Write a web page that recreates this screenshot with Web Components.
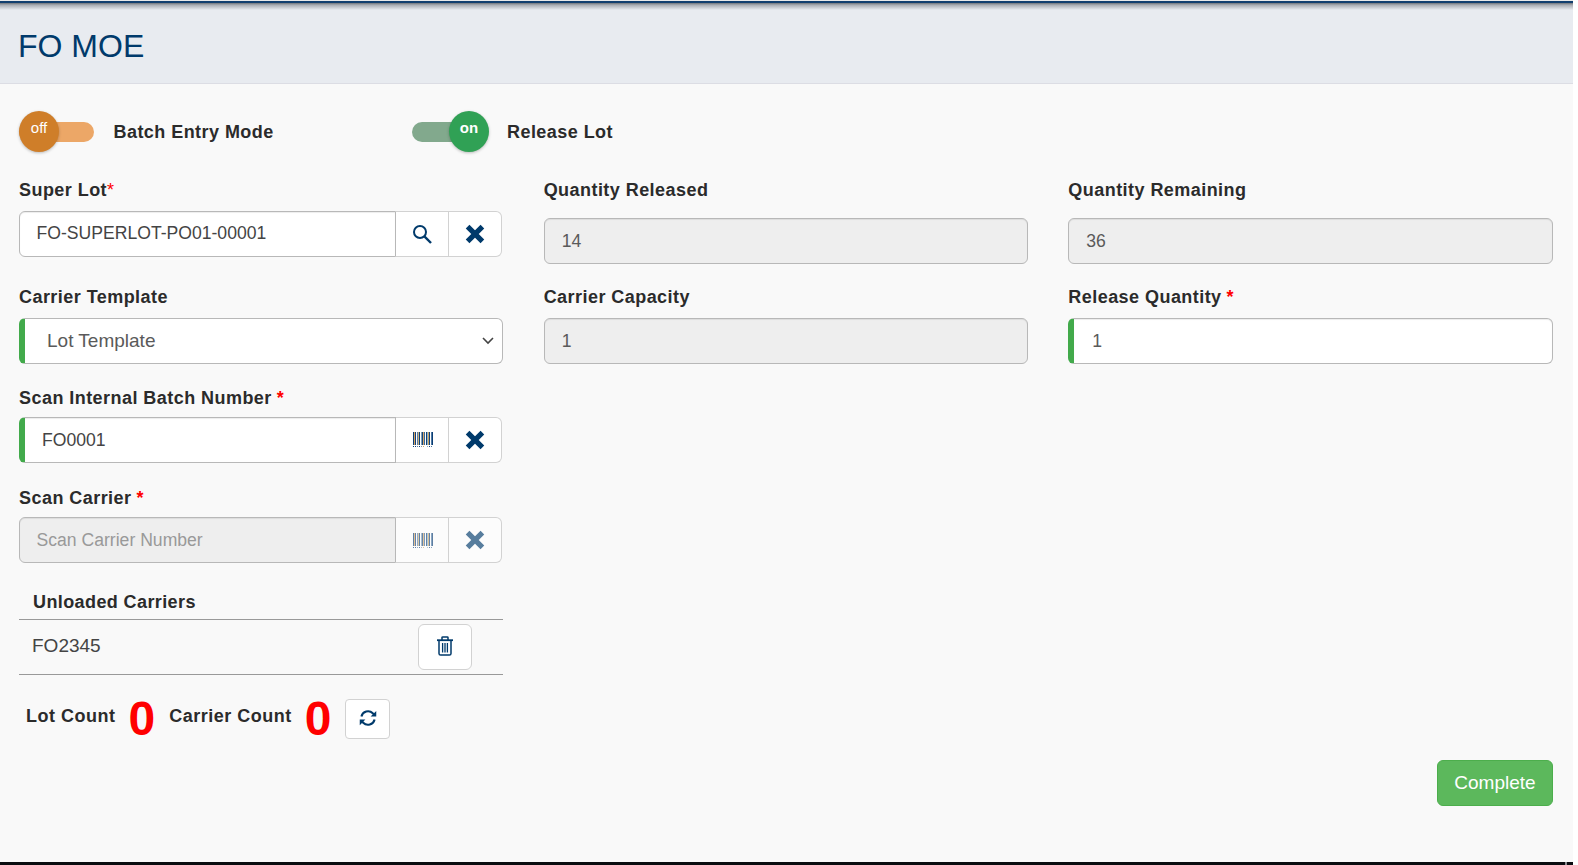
<!DOCTYPE html>
<html lang="en">
<head>
<meta charset="utf-8">
<title>FO MOE</title>
<style>
    html, body { margin: 0; padding: 0; background: #fff; height: 100%; overflow: hidden; }
    body { font-family: "Liberation Sans", Arial, sans-serif; }
</style>
</head>
<body>
<moe-app>
    <moe-header slot="header">FO MOE</moe-header>

    <moe-toggle slot="toggles" style="width:393px">Batch Entry Mode</moe-toggle>
    <moe-toggle slot="toggles" on>Release Lot</moe-toggle>

    <div slot="col1" style="margin-right:1px">
        <moe-field required="tight" style="margin-bottom:28px"><moe-group slot="control" value="FO-SUPERLOT-PO01-00001" icon="search" style="--text-lh:42px"></moe-group>Super Lot</moe-field>
        <moe-field style="margin-bottom:22px"><moe-select slot="control">Lot Template</moe-select>Carrier Template</moe-field>
        <moe-field required="spaced" style="margin-bottom:23px;--label-gap:6.5px"><moe-group slot="control" value="FO0001" icon="barcode" valid></moe-group>Scan Internal Batch Number</moe-field>
        <moe-field required="spaced" style="--label-gap:7.5px"><moe-group slot="control" placeholder="Scan Carrier Number" icon="barcode" disabled></moe-group>Scan Carrier</moe-field>
        <carrier-table heading="Unloaded Carriers">
            <carrier-row>FO2345</carrier-row>
        </carrier-table>
        <moe-counts></moe-counts>
    </div>

    <div slot="col2">
        <moe-field style="margin-bottom:21px;--label-gap:16px"><moe-box slot="control" readonly>14</moe-box>Quantity Released</moe-field>
        <moe-field><moe-box slot="control" readonly>1</moe-box>Carrier Capacity</moe-field>
    </div>

    <div slot="col3">
        <moe-field style="margin-bottom:21px;--label-gap:16px"><moe-box slot="control" readonly>36</moe-box>Quantity Remaining</moe-field>
        <moe-field required="spaced"><moe-box slot="control" valid>1</moe-box>Release Quantity</moe-field>
    </div>

    <moe-button slot="actions">Complete</moe-button>
</moe-app>

<script>
const NAVY = '#003a6b';

// barcode is 20 one pixel bars, the colours are what the reference shows at this size
const barColors = ['#0a3f78', '#d9a25e', '#11407a', '#fff', '#5f7fa8', '#c9b27c', '#0f3f75', '#fff', '#7fa0b8', '#16457c',
    '#d8a868', '#3a6a9a', '#fff', '#0d3f78', '#8fb3c4', '#c8a060', '#14437a', '#fff', '#4f7aa5', '#0b3c72'];
const barcodeBars = barColors.map((c, i) =>
    `<rect x="${i}" y="0" width="1" height="13" fill="${c}"/>` +
    (i % 2 ? '' : `<rect x="${i}" y="14" width="1" height="1" fill="${c}"/>`)).join('');

const ICONS = {
    search: `<svg width="20" height="20" viewBox="0 0 20 20" fill="none" stroke="${NAVY}" stroke-width="2">
        <circle cx="8" cy="8" r="6"/><path d="M12.4 12.4 L19 19" stroke-width="2.4"/></svg>`,
    barcode: `<svg width="20" height="15" viewBox="0 0 20 15" style="margin-left:2px">${barcodeBars}</svg>`,
    close: `<svg width="20" height="20" viewBox="0 0 20 20" fill="none" stroke="${NAVY}" stroke-width="5.2">
        <path d="M2.6 2.6 L17.4 17.4 M17.4 2.6 L2.6 17.4"/></svg>`,
    trash: `<svg width="16" height="20" viewBox="0 0 16 20" fill="none" stroke="${NAVY}" stroke-width="1.5" style="margin:0 0 3px 1px">
        <path d="M0 4.2 H16" stroke-width="1.8"/><path d="M5 4 V1.6 Q5 .9 5.8 .9 H10.2 Q11 .9 11 1.6 V4"/>
        <path d="M2 5 V17.4 Q2 19 3.6 19 H12.4 Q14 19 14 17.4 V5"/>
        <path d="M5.6 7 V16.5 M8 7 V16.5 M10.4 7 V16.5" stroke-width="1.3"/></svg>`,
    refresh: `<svg width="18" height="18" viewBox="0 0 24 24" fill="none" stroke="${NAVY}" stroke-width="2.8" style="margin-bottom:2px">
        <path d="M3.2 10 A9 9 0 0 1 18.4 5.8 L21 8.2"/><path d="M20.8 14 A9 9 0 0 1 5.6 18.2 L3 15.8"/>
        <path d="M23 2.5 V10 H15.5 Z" fill="${NAVY}" stroke="none"/><path d="M1 21.5 V14 H8.5 Z" fill="${NAVY}" stroke="none"/></svg>`
};

class MoeApp extends HTMLElement {
    constructor() {
        super();
        this.attachShadow({ mode: 'open' }).innerHTML = `
        <style>
            :host { display: flex; flex-direction: column; width: 1573px; height: 865px; background: #f9f9f9; color: #2b2b2b; }
            .top { height: 1px; background: #e9e9e9; }
            .line { height: 2px; background: #123f6e; }
            main { flex: 1; display: flex; flex-direction: column; padding: 27px 20px 0 19px; }
            .toggles { display: flex; align-items: center; height: 41px; margin-bottom: 26px; }
            .cols { display: grid; grid-template-columns: repeat(3, 1fr); column-gap: 40px; }
            .actions { display: flex; justify-content: flex-end; margin-top: 21px; }
            .bottom { display: flex; justify-content: flex-end; height: 3px; background: #0a0c10; }
            .tick { width: 2px; background: #8a8c90; margin-right: 6px; }
        </style>
        <div class="top"></div>
        <div class="line"></div>
        <slot name="header"></slot>
        <main>
            <div class="toggles"><slot name="toggles"></slot></div>
            <div class="cols">
                <slot name="col1"></slot>
                <slot name="col2"></slot>
                <slot name="col3"></slot>
            </div>
            <div class="actions"><slot name="actions"></slot></div>
        </main>
        <div class="bottom"><div class="tick"></div></div>`;
    }
}

class MoeHeader extends HTMLElement {
    constructor() {
        super();
        this.attachShadow({ mode: 'open' }).innerHTML = `
        <style>
            :host { display: block; height: 81px; box-sizing: border-box; border-bottom: 1px solid #dcdde4; background: linear-gradient(#70747a, #a9adb3 2px, #e8ebf0 7px); }
            h1 { margin: 0; padding: 25px 0 0 18px; font: 400 32px/37px "Liberation Sans", Arial, sans-serif; color: ${NAVY}; }
        </style>
        <h1><slot></slot></h1>`;
    }
}

class MoeToggle extends HTMLElement {
    constructor() {
        super();
        const on = this.hasAttribute('on');
        this.attachShadow({ mode: 'open' }).innerHTML = `
        <style>
            :host { display: flex; align-items: center; }
            .switch { position: relative; width: ${on ? 77 : 75}px; height: 41px; }
            .track { position: absolute; left: 0; right: ${on ? 10 : 0}px; top: 11px; height: 20px; border-radius: 10px; background: ${on ? '#82a98d' : '#eca767'}; }
            .knob { position: absolute; top: 0; ${on ? 'right' : 'left'}: 0; width: 40px; height: 41px; border-radius: 50%;
                background: ${on ? '#30a155' : '#cf7e29'}; box-shadow: 0 1px 3px rgba(0,0,0,.25);
                color: #fff; text-align: center; font: ${on ? 700 : 400} 15px/33px "Liberation Sans", Arial, sans-serif; }
            .label { margin-left: ${on ? 18 : 19.5}px; font: 700 18px/24px "Liberation Sans", Arial, sans-serif; letter-spacing: .45px; color: #2b2b2b; }
        </style>
        <div class="switch"><div class="track"></div><div class="knob">${on ? 'on' : 'off'}</div></div>
        <div class="label"><slot></slot></div>`;
    }
}

class MoeField extends HTMLElement {
    constructor() {
        super();
        const req = this.getAttribute('required');
        const star = req ? `<span class="star ${req}">*</span>` : '';
        this.attachShadow({ mode: 'open' }).innerHTML = `
        <style>
            :host { display: block; }
            label { display: block; margin-bottom: var(--label-gap, 9px); font: 700 18px/24px "Liberation Sans", Arial, sans-serif; letter-spacing: .45px; color: #2b2b2b; white-space: nowrap; }
            .star { color: #f00; font-weight: 400; letter-spacing: 0; }
            .spaced { margin-left: 5px; font-weight: 700; }
        </style>
        <label><slot></slot>${star}</label>
        <slot name="control"></slot>`;
    }
}

class MoeBox extends HTMLElement {
    constructor() {
        super();
        const valid = this.hasAttribute('valid');
        const readonly = this.hasAttribute('readonly');
        this.attachShadow({ mode: 'open' }).innerHTML = `
        <style>
            :host { display: block; box-sizing: border-box; height: 46px; padding-left: ${valid ? 18 : 17}px; border: 1px solid #b8b8b8; border-radius: 6px;
                ${valid ? 'border-left: 6px solid #42aa4b;' : ''}
                background: ${readonly ? '#eee' : '#fff'}; box-shadow: inset 0 1px 1px rgba(0,0,0,.075);
                font: 400 17.6px/44px "Liberation Sans", Arial, sans-serif; color: #5a5a5a; }
        </style>
        <slot></slot>`;
    }
}

class MoeSelect extends HTMLElement {
    constructor() {
        super();
        this.attachShadow({ mode: 'open' }).innerHTML = `
        <style>
            :host { display: flex; align-items: center; justify-content: space-between; box-sizing: border-box; height: 46px;
                padding: 0 8px 0 22px; border: 1px solid #b8b8b8; border-left: 6px solid #42aa4b; border-radius: 6px; background: #fff;
                font: 400 19px/44px "Liberation Sans", Arial, sans-serif; color: #5a5a5a; }
            svg { display: block; }
        </style>
        <slot></slot>
        <svg width="12" height="8" viewBox="0 0 12 8" fill="none" stroke="#444" stroke-width="1.6"><path d="M1 1 L6 6 L11 1"/></svg>`;
    }
}

class MoeGroup extends HTMLElement {
    constructor() {
        super();
        const valid = this.hasAttribute('valid');
        const disabled = this.hasAttribute('disabled');
        const text = this.getAttribute('value') || this.getAttribute('placeholder');
        const icon = ICONS[this.getAttribute('icon')];
        this.attachShadow({ mode: 'open' }).innerHTML = `
        <style>
            :host { display: flex; box-sizing: border-box; height: 46px; width: calc(100% - 1px); }
            .input { flex: 1; box-sizing: border-box; padding-left: ${valid ? 17 : 16.5}px; border: 1px solid #b8b8b8; border-radius: 6px 0 0 6px;
                ${valid ? 'border-left: 6px solid #42aa4b;' : ''}
                background: ${disabled ? '#eee' : '#fff'}; box-shadow: inset 0 1px 1px rgba(0,0,0,.075);
                font: 400 17.6px/var(--text-lh, 44px) "Liberation Sans", Arial, sans-serif; color: ${this.hasAttribute('placeholder') ? '#999' : '#444'}; }
            .btn { display: flex; align-items: center; justify-content: center; box-sizing: border-box; background: ${disabled ? '#fcfcfc' : '#fff'};
                border: 1px solid #d2d2d2; border-left: 0; }
            .one { width: 53px; border-left: 0; }
            .two { width: 53px; border-radius: 0 6px 6px 0; }
            .btn svg { ${disabled ? 'opacity: .65;' : ''} }
        </style>
        <div class="input">${text}</div>
        <div class="btn one">${icon}</div>
        <div class="btn two">${ICONS.close}</div>`;
    }
}

class CarrierTable extends HTMLElement {
    constructor() {
        super();
        this.attachShadow({ mode: 'open' }).innerHTML = `
        <style>
            :host { display: block; margin-top: 27px; }
            h2 { margin: 0; padding: 0 0 5px 14px; border-bottom: 1px solid #999; font: 700 18px/24px "Liberation Sans", Arial, sans-serif; letter-spacing: .4px; color: #2b2b2b; }
        </style>
        <h2>${this.getAttribute('heading')}</h2>
        <slot></slot>`;
    }
}

class CarrierRow extends HTMLElement {
    constructor() {
        super();
        this.attachShadow({ mode: 'open' }).innerHTML = `
        <style>
            :host { display: flex; justify-content: space-between; align-items: flex-start; box-sizing: border-box; height: 55px; padding: 4px 31px 0 13px;
                border-bottom: 1px solid #999; font: 400 19px/24px "Liberation Sans", Arial, sans-serif; color: #444; }
            .txt { margin-top: 10px; }
            .btn { display: flex; align-items: center; justify-content: center; box-sizing: border-box; width: 54px; height: 46px; border: 1px solid #d2d2d2; border-radius: 6px; background: #fff; }
        </style>
        <div class="txt"><slot></slot></div>
        <div class="btn">${ICONS.trash}</div>`;
    }
}

class MoeCounts extends HTMLElement {
    constructor() {
        super();
        this.attachShadow({ mode: 'open' }).innerHTML = `
        <style>
            :host { display: flex; align-items: flex-start; height: 40px; margin-top: 24px; padding-left: 7px; }
            .lbl { margin-top: 5px; font: 700 18px/24px "Liberation Sans", Arial, sans-serif; letter-spacing: .5px; color: #2b2b2b; }
            .num { margin: 0 14px 0 13px; font: 700 48px/40px "Liberation Sans", Arial, sans-serif; color: #f00; }
            .btn { display: flex; align-items: center; justify-content: center; box-sizing: border-box; width: 45px; height: 40px; border: 1px solid #d2d2d2; border-radius: 4px; background: #fff; }
        </style>
        <span class="lbl">Lot Count</span><span class="num">0</span>
        <span class="lbl">Carrier Count</span><span class="num">0</span>
        <div class="btn">${ICONS.refresh}</div>`;
    }
}

class MoeButton extends HTMLElement {
    constructor() {
        super();
        this.attachShadow({ mode: 'open' }).innerHTML = `
        <style>
            :host { display: block; box-sizing: border-box; width: 116px; height: 46px; border: 1px solid #4cae4c; border-radius: 6px; background: #5cb85c;
                color: #fff; text-align: center; font: 400 19px/43px "Liberation Sans", Arial, sans-serif; }
        </style>
        <slot></slot>`;
    }
}

customElements.define('moe-app', MoeApp);
customElements.define('moe-header', MoeHeader);
customElements.define('moe-toggle', MoeToggle);
customElements.define('moe-field', MoeField);
customElements.define('moe-box', MoeBox);
customElements.define('moe-select', MoeSelect);
customElements.define('moe-group', MoeGroup);
customElements.define('carrier-table', CarrierTable);
customElements.define('carrier-row', CarrierRow);
customElements.define('moe-counts', MoeCounts);
customElements.define('moe-button', MoeButton);
</script>
</body>
</html>
